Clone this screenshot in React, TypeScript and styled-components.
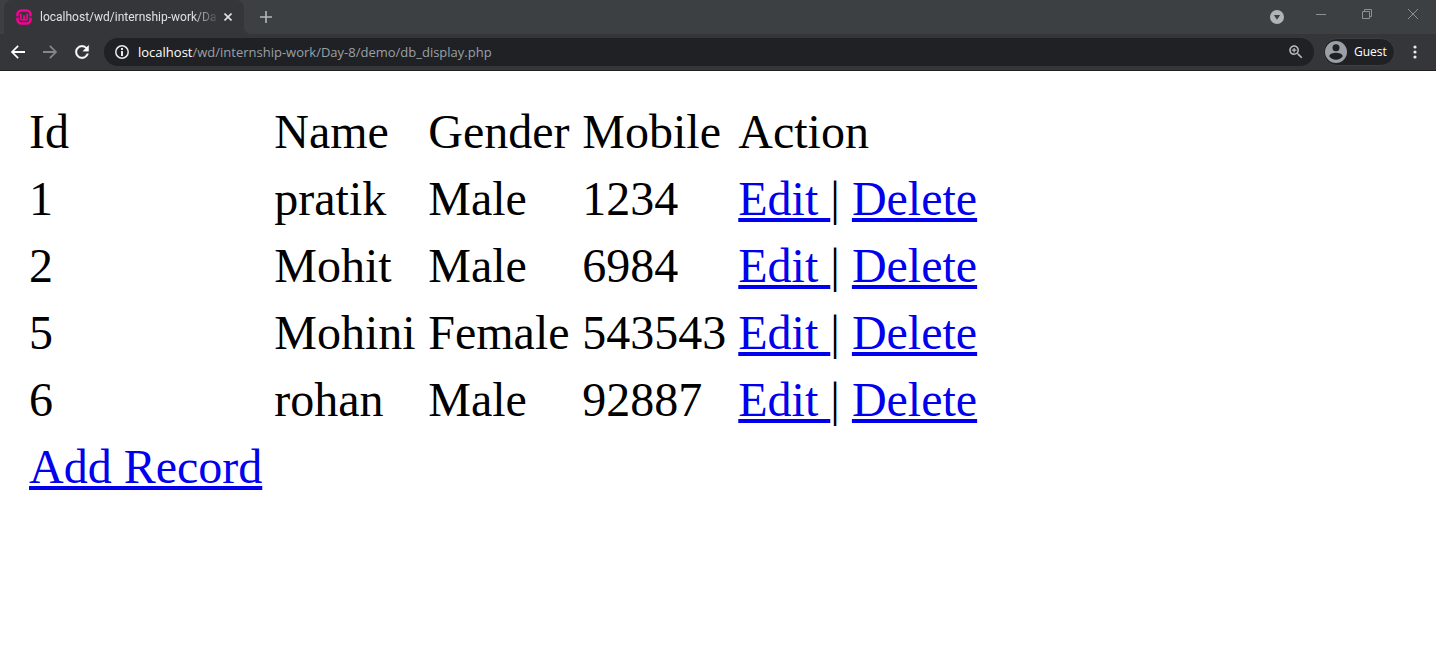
import React from 'react';
import styled, { createGlobalStyle } from 'styled-components';

const GlobalStyle = createGlobalStyle`
  * { box-sizing: border-box; }
  body { margin: 0; background: #ffffff; }
`;

const Browser = styled.div`
  display: flex;
  flex-direction: column;
  min-height: 100vh;
`;

const Chrome = styled.header`
  font-family: 'Open Sans', 'Noto Sans', sans-serif;
  background: #35363a;
  border-bottom: 1px solid #211f20;
`;

const TabStrip = styled.div`
  display: flex;
  height: 34px;
  padding-left: 4px;
  background: #3c4043;
`;

const Tab = styled.div`
  position: relative;
  display: flex;
  align-items: center;
  width: 240px;
  padding: 0 8px 0 12px;
  border-radius: 8px 8px 0 0;
  background: #35363a;

  &::after {
    content: '';
    position: absolute;
    left: 100%;
    bottom: 0;
    width: 8px;
    height: 8px;
    background: radial-gradient(circle at 100% 0, transparent 8px, #35363a 8px);
  }
`;

const TabTitle = styled.span`
  flex: 1;
  min-width: 0;
  margin-left: 8px;
  overflow: hidden;
  white-space: nowrap;
  font-family: Roboto, 'Open Sans', sans-serif;
  font-size: 12px;
  line-height: 16px;
  color: #dfe1e5;
  mask-image: linear-gradient(to right, #000 calc(100% - 28px), transparent);
`;

const IconButton = styled.button<{ $width: number; $height: number; $tone: string }>`
  display: flex;
  flex: none;
  align-items: center;
  justify-content: center;
  width: ${(p) => p.$width}px;
  height: ${(p) => p.$height}px;
  padding: 0;
  border: 0;
  background: none;
  color: ${(p) => p.$tone};
`;

const NewTabSlot = styled.div`
  display: flex;
  align-items: center;
  padding-left: 8px;
`;

const WindowControls = styled.div`
  display: flex;
  align-items: flex-start;
  margin-left: auto;
`;

const TabSearchSlot = styled.div`
  padding-right: 9px;
`;

const Toolbar = styled.div`
  display: flex;
  align-items: center;
  height: 36px;
  padding: 0 5px 0 2px;
`;

const AddressBar = styled.div`
  display: flex;
  flex: 1;
  align-items: center;
  min-width: 0;
  height: 28px;
  margin: 0 9px 0 6px;
  padding: 0 6px;
  border-radius: 14px;
  background: #202124;
`;

const Host = styled.label`
  margin-left: 4px;
  font-size: 13px;
  line-height: 20px;
  color: #ffffff;
`;

const PathInput = styled.input`
  flex: 1;
  min-width: 0;
  height: 20px;
  padding: 0;
  border: 0;
  outline: 0;
  background: transparent;
  font-family: inherit;
  font-size: 13px;
  line-height: 20px;
  color: #9aa0a6;
`;

const Profile = styled.button`
  display: flex;
  align-items: center;
  gap: 7px;
  width: 72px;
  height: 28px;
  margin-right: 4px;
  padding: 0 1px;
  border: 1px solid #3c3e42;
  border-radius: 14px;
  background: #202124;
  font-family: inherit;
  font-size: 12px;
  line-height: 16px;
  color: #ffffff;
`;

const Page = styled.main`
  padding: 24px 20px;
  font-family: 'Liberation Serif', 'Times New Roman', serif;
  font-size: 48px;
  line-height: 55px;
  color: #000000;
`;

const Records = styled.table`
  border-collapse: separate;
  border-spacing: 6px;
`;

const HeadCell = styled.th`
  min-width: 148px;
  padding: 3px;
  font-weight: 400;
  text-align: left;
  white-space: nowrap;
`;

const Cell = styled.td`
  padding: 3px;
  white-space: nowrap;
`;

const Link = styled.a`
  color: #0000ee;
  text-decoration: underline;
  text-decoration-thickness: 4px;
  text-underline-offset: 3px;
`;

const Favicon = () => (
  <svg width="16" height="16" viewBox="0 0 16 16" fill="none" stroke="#f70094">
    <path d="M1.500 6.600V5.500a4 4 0 0 1 4-4h5a4 4 0 0 1 4 4v1.100M14.500 9.400v1.100a4 4 0 0 1-4 4h-5a4 4 0 0 1-4-4V9.400" strokeWidth="2.600" />
    <path d="M0 6.800h3.200M12.800 6.800H16M0 9.200h3.200M12.800 9.200H16" strokeWidth="1" />
    <path d="M4.800 4.800v4.800a1.600 1.600 0 0 0 3.200 0V6.200v3.400a1.600 1.600 0 0 0 3.200 0V4.800" strokeWidth="1.700" />
  </svg>
);

const Glyph = ({ size, children }: { size: number; children: React.ReactNode }) => (
  <svg width={size} height={size} viewBox="0 0 24 24" fill="currentColor" aria-hidden="true">
    {children}
  </svg>
);

const Avatar = () => (
  <svg width="22" height="22" viewBox="0 0 22 22" aria-hidden="true">
    <circle cx="11" cy="11" r="11" fill="#9aa0a6" />
    <circle cx="11" cy="6.800" r="3.500" fill="#202124" />
    <path d="M4.200 15.200c0-2.400 4.500-3.500 6.800-3.500s6.800 1.100 6.800 3.500c-1.500 2.200-4 3.600-6.800 3.600s-5.300-1.400-6.800-3.600z" fill="#202124" />
  </svg>
);

const records = [
  { id: 1, name: 'pratik', gender: 'Male', mobile: '1234' },
  { id: 2, name: 'Mohit', gender: 'Male', mobile: '6984' },
  { id: 5, name: 'Mohini', gender: 'Female', mobile: '543543' },
  { id: 6, name: 'rohan', gender: 'Male', mobile: '92887' },
];

const columns = ['Id', 'Name', 'Gender', 'Mobile', 'Action'];

export default function App() {
  return (
    <Browser>
      <GlobalStyle />
      <Chrome>
        <TabStrip>
          <Tab>
            <Favicon />
            <TabTitle>localhost/wd/internship-work/Da</TabTitle>
            <IconButton $width={16} $height={16} $tone="#dfe1e5" aria-label="Close tab">
              <svg width="8" height="8" viewBox="0 0 8 8" stroke="currentColor" strokeWidth="1.600">
                <path d="M0.500 0.500l7 7M7.500 0.500l-7 7" />
              </svg>
            </IconButton>
          </Tab>
          <NewTabSlot>
            <IconButton $width={28} $height={28} $tone="#b5b8bb" aria-label="New tab">
              <svg width="12" height="12" viewBox="0 0 12 12" stroke="currentColor" strokeWidth="1.600">
                <path d="M6 0v12M0 6h12" />
              </svg>
            </IconButton>
          </NewTabSlot>
          <WindowControls>
            <TabSearchSlot>
              <IconButton $width={24} $height={34} $tone="#b1b4b6" aria-label="Search tabs">
                <svg width="14" height="14" viewBox="0 0 14 14">
                  <circle cx="7" cy="7" r="7" fill="currentColor" />
                  <path d="M3.800 5h6.400L7 9.800z" fill="#3c4043" />
                </svg>
              </IconButton>
            </TabSearchSlot>
            <IconButton $width={46} $height={28} $tone="#8d9092" aria-label="Minimize">
              <svg width="10" height="10" viewBox="0 0 10 10" stroke="currentColor">
                <path d="M0 5.500h10" />
              </svg>
            </IconButton>
            <IconButton $width={46} $height={28} $tone="#8d9092" aria-label="Restore">
              <svg width="10" height="10" viewBox="0 0 10 10" fill="none" stroke="currentColor">
                <path d="M0.500 2.500h7v7h-7zM2.500 2.500v-2h7v7h-2" />
              </svg>
            </IconButton>
            <IconButton $width={46} $height={28} $tone="#8d9092" aria-label="Close">
              <svg width="10" height="10" viewBox="0 0 10 10" stroke="currentColor">
                <path d="M0 0l10 10M10 0L0 10" />
              </svg>
            </IconButton>
          </WindowControls>
        </TabStrip>
        <Toolbar>
          <IconButton $width={32} $height={28} $tone="#ffffff" aria-label="Back">
            <Glyph size={20}>
              <path d="M20.400 10.900H7.400l5.500-5.500L11.400 3.900 3.400 12l8 8.100 1.500-1.500-5.500-5.500h13z" />
            </Glyph>
          </IconButton>
          <IconButton $width={32} $height={28} $tone="#85868a" aria-label="Forward">
            <Glyph size={20}>
              <path d="M3.600 10.900h13l-5.500-5.500 1.500-1.500 8 8.100-8 8.100-1.500-1.500 5.500-5.500h-13z" />
            </Glyph>
          </IconButton>
          <IconButton $width={32} $height={28} $tone="#ffffff" aria-label="Reload">
            <Glyph size={20}>
              <path d="M17.650 6.350C16.200 4.900 14.210 4 12 4c-4.420 0-7.990 3.580-7.990 8s3.570 8 7.990 8c3.730 0 6.840-2.550 7.730-6h-2.080c-.82 2.330-3.040 4-5.650 4-3.310 0-6-2.690-6-6s2.690-6 6-6c1.660 0 3.140.69 4.220 1.780L13 11h7V4l-2.350 2.350z" stroke="currentColor" strokeWidth="0.400" />
            </Glyph>
          </IconButton>
          <AddressBar>
            <IconButton $width={24} $height={28} $tone="#e8eaed" aria-label="View site information">
              <svg width="14" height="14" viewBox="0 0 14 14" aria-hidden="true">
                <circle cx="7" cy="7" r="6.200" fill="none" stroke="currentColor" strokeWidth="1.500" />
                <path d="M6 3h2v2H6zM6 6h2v5H6z" fill="currentColor" />
              </svg>
            </IconButton>
            <Host htmlFor="path">localhost</Host>
            <PathInput id="path" defaultValue="/wd/internship-work/Day-8/demo/db_display.php" />
            <IconButton $width={24} $height={28} $tone="#b8bbbe" aria-label="Zoom">
              <Glyph size={18}>
                <path d="M15.500 14h-.79l-.28-.27C15.410 12.590 16 11.110 16 9.500 16 5.910 13.090 3 9.500 3S3 5.910 3 9.500 5.910 16 9.500 16c1.610 0 3.090-.59 4.230-1.570l.27.28v.79l5 4.990L20.490 19l-4.990-5zm-6 0C7.010 14 5 11.990 5 9.500S7.010 5 9.500 5 14 7.010 14 9.500 11.990 14 9.500 14zM12.500 8.700h-2.200V6.500H8.700v2.200H6.500v1.600h2.200v2.200h1.600v-2.200h2.200z" />
              </Glyph>
            </IconButton>
          </AddressBar>
          <Profile>
            <Avatar />
            Guest
          </Profile>
          <IconButton $width={32} $height={28} $tone="#e8eaed" aria-label="Menu">
            <svg width="4" height="14" viewBox="0 0 4 14" fill="currentColor">
              <circle cx="2" cy="2" r="1.600" />
              <circle cx="2" cy="7" r="1.600" />
              <circle cx="2" cy="12" r="1.600" />
            </svg>
          </IconButton>
        </Toolbar>
      </Chrome>
      <Page>
        <Records>
          <thead>
            <tr>
              {columns.map((c) => (
                <HeadCell key={c} scope="col">{c}</HeadCell>
              ))}
            </tr>
          </thead>
          <tbody>
            {records.map((r) => (
              <tr key={r.id}>
                <Cell>{r.id}</Cell>
                <Cell>{r.name}</Cell>
                <Cell>{r.gender}</Cell>
                <Cell>{r.mobile}</Cell>
                <Cell>
                  <Link href="#edit">Edit </Link>| <Link href="#delete">Delete</Link>
                </Cell>
              </tr>
            ))}
            <tr>
              <Cell>
                <Link href="#add">Add Record</Link>
              </Cell>
            </tr>
          </tbody>
        </Records>
      </Page>
    </Browser>
  );
}
